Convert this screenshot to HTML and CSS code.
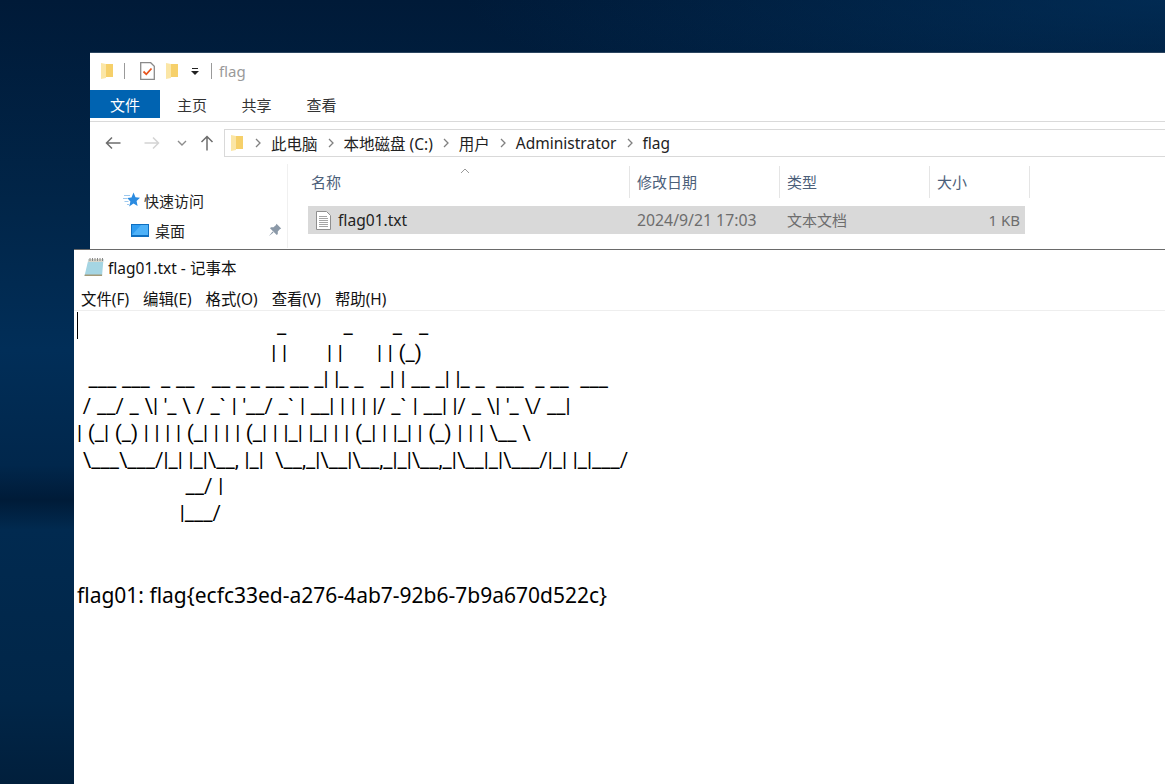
FILE: index.html
```
<!DOCTYPE html>
<html lang="zh">
<head>
<meta charset="utf-8">
<title>flag01.txt - 记事本</title>
<link rel="stylesheet" href="styles.css">
</head>
<body>
<div class="desktop">
  <section class="explorer">
    <div class="qat">
      <svg class="ic-folder" viewBox="0 0 14 18"><path d="M5 2h8v13H5z" fill="#f6d06a"/><path d="M1 1l5 1v14l-5 1z" fill="#fbe6a6"/></svg>
      <span class="qat-sep"></span>
      <svg class="ic-check" viewBox="0 0 15 18"><path d="M.7.7h10l3.600 3.600v13h-13.600z" fill="#fff" stroke="#8a8a8a" stroke-width="1.300"/><path d="M3.500 9.500l2.800 2.800L11.500 6.500" fill="none" stroke="#e8541c" stroke-width="1.800"/></svg>
      <svg class="ic-folder" viewBox="0 0 14 18"><path d="M5 2h8v13H5z" fill="#f6d06a"/><path d="M1 1l5 1v14l-5 1z" fill="#fbe6a6"/></svg>
      <svg class="ic-drop" viewBox="0 0 8 7"><path d="M1 0h6v1H1zM0 3h8L4 7z" fill="#222"/></svg>
      <span class="qat-sep two"></span>
      <span class="win-title">flag</span>
    </div>
    <div class="ribbon">
      <span class="tab active">文件</span>
      <span class="tab">主页</span>
      <span class="tab">共享</span>
      <span class="tab">查看</span>
    </div>
    <div class="navbar">
      <svg class="nav back" viewBox="0 0 16 14"><path d="M15.500 7H1.500M7 1.500 1.500 7 7 12.500" fill="none" stroke="#6d6d6d" stroke-width="1.500"/></svg>
      <svg class="nav fwd" viewBox="0 0 16 14"><path d="M.5 7h14M9 1.500 14.500 7 9 12.500" fill="none" stroke="#d4d4d4" stroke-width="1.500"/></svg>
      <svg class="nav down" viewBox="0 0 10 6"><path d="M1 1l4 4 4-4" fill="none" stroke="#8c8c8c" stroke-width="1.400"/></svg>
      <svg class="nav up" viewBox="0 0 14 16"><path d="M7 15.500V1.500M1.500 7 7 1.500 12.500 7" fill="none" stroke="#6d6d6d" stroke-width="1.500"/></svg>
      <div class="crumbs">
        <svg class="ic-folder" viewBox="0 0 14 18"><path d="M5 2h8v13H5z" fill="#f6d06a"/><path d="M1 1l5 1v14l-5 1z" fill="#fbe6a6"/></svg>
        <svg class="chev first" viewBox="0 0 6 10"><path d="M1 1l4 4-4 4" fill="none" stroke="#808080" stroke-width="1.300"/></svg>
        <span>此电脑</span>
        <svg class="chev" viewBox="0 0 6 10"><path d="M1 1l4 4-4 4" fill="none" stroke="#808080" stroke-width="1.300"/></svg>
        <span>本地磁盘 (C:)</span>
        <svg class="chev" viewBox="0 0 6 10"><path d="M1 1l4 4-4 4" fill="none" stroke="#808080" stroke-width="1.300"/></svg>
        <span>用户</span>
        <svg class="chev" viewBox="0 0 6 10"><path d="M1 1l4 4-4 4" fill="none" stroke="#808080" stroke-width="1.300"/></svg>
        <span>Administrator</span>
        <svg class="chev" viewBox="0 0 6 10"><path d="M1 1l4 4-4 4" fill="none" stroke="#808080" stroke-width="1.300"/></svg>
        <span>flag</span>
      </div>
    </div>
    <div class="body">
      <nav class="side">
        <div class="side-row quick">
          <svg class="ic-star" viewBox="0 0 17 16"><path d="M10.500 .5l2 4.800 4.500.4-3.400 3.200 1 5L10.500 11.500 6.200 14.600l1.200-5.200L4.200 6l4.300-.6z" fill="#2b8be0"/><path d="M1 3.500h6M0 6.500h4M1.500 9.500h4M4 12.500h2" stroke="#9cc8ee" stroke-width="1"/></svg>
          <span>快速访问</span>
        </div>
        <div class="side-row desk">
          <svg class="ic-desk" viewBox="0 0 18 13"><rect width="18" height="13" fill="#0f6fc0"/><path d="M1 1h16v10H1z" fill="#2f9cf0"/><path d="M1 11 10 1h7v10z" fill="#4fb2f8"/></svg>
          <span>桌面</span>
          <svg class="ic-pin" viewBox="0 0 14 14"><path d="M8.500.8 13.200 5.500 11.800 6.200 9.800 8.500 9.800 11 8.800 12 2 5.200 3 4.200 5.500 4.200 7.800 2.200zM4.500 8.500 1 13l4.500-3.500z" fill="#8b99a8"/></svg>
        </div>
      </nav>
      <div class="files">
        <svg class="sort" viewBox="0 0 10 6"><path d="M1 5l4-4 4 4" fill="none" stroke="#9a9a9a"/></svg>
        <div class="cols">
          <span class="col c1">名称</span>
          <span class="col c2">修改日期</span>
          <span class="col c3">类型</span>
          <span class="col c4">大小</span>
        </div>
        <div class="file-row">
          <span class="cell c1 name">
            <svg class="ic-doc" viewBox="0 0 15 19"><path d="M.5.5h10l4 4v14H.5z" fill="#fff" stroke="#8f8f8f"/><path d="M3 5.500h8M3 7.500h9M3 9.500h9M3 11.500h9M3 13.500h9M3 15.500h9" stroke="#a5a5a5"/></svg>
            flag01.txt
          </span>
          <span class="cell c2 date">2024/9/21 17:03</span>
          <span class="cell c3">文本文档</span>
          <span class="cell c4">1 KB</span>
        </div>
      </div>
    </div>
  </section>

  <section class="notepad">
    <div class="np-title">
      <svg class="ic-note" viewBox="0 0 20 20"><path d="M4.500 2H19.500L18 19H.5z" fill="#a5d5e3"/><path d="M4.500 2H19.500L19.200 5H4z" fill="#d6d6cc"/><path d="M.5 19H18l.2-1.500H.8z" fill="#a39a78"/><path d="M6 1v3M8.500 1v3M11 1v3M13.500 1v3M16 1v3M18.500 1v3" stroke="#888"/></svg>
      <span>flag01.txt - 记事本</span>
    </div>
    <div class="np-menu">
      <span>文件(F)</span>
      <span>编辑(E)</span>
      <span>格式(O)</span>
      <span>查看(V)</span>
      <span>帮助(H)</span>
    </div>
    <div class="np-edit">
      <span class="caret"></span>
<pre class="np-text">                                   _          _       _   _
                                  | |       | |      | | (_)
  ___ ___  _ __   __ _ _ __ __ _| |_ _   _| | __ _| |_ _  ___  _ __  ___ 
 / __/ _ \| '_ \ / _` | '__/ _` | __| | | | |/ _` | __| |/ _ \| '_ \/ __|
| (_| (_) | | | | (_| | | | (_| | |_| |_| | | (_| | |_| | (_) | | | \__ \
 \___\___/|_| |_|\__, |_|  \__,_|\__|\__,_|_|\__,_|\__|_|\___/|_| |_|___/
                   __/ |
                  |___/


<span class="np-flag">flag01: flag{ecfc33ed-a276-4ab7-92b6-7b9a670d522c}</span></pre>
    </div>
  </section>
</div>
</body>
</html>
```

FILE: styles.css
```
* { box-sizing: border-box; }
html, body { margin: 0; height: 100%; overflow: hidden; }
body { font-family: "Noto Sans", "Noto Sans CJK SC", sans-serif; }
.desktop {
  position: relative;
  width: 1165px;
  height: 784px;
  overflow: hidden;
  background:
    radial-gradient(700px 120px at 100% 0, rgba(2,56,104,.55), rgba(2,56,104,0)),
    linear-gradient(180deg, #001a38 0, #012548 200px, #012e58 350px, #01274c 465px, #001b38 500px, #012a50 530px, #012648 700px, #011f3c 784px);
}
.explorer {
  position: absolute;
  left: 90px; top: 52px;
  width: 1075px; height: 198px;
  background: #fff;
  border-top: 1px solid #2c4560;
  color: #1e1e1e;
}
.qat { display: flex; align-items: center; height: 37px; padding-left: 10px; padding-bottom: 1px; }
.qat .ic-folder { width: 14px; height: 18px; }
.qat-sep { width: 1px; height: 16px; background: #9a9a9a; margin: 0 15px 0 10px; }
.qat-sep.two { margin: 0 7px 0 12px; }
.ic-check { width: 15px; height: 18px; margin-right: 10px; }
.ic-drop { width: 8px; height: 7px; margin-left: 12px; }
.win-title { font-size: 15px; color: #9a9a9a; }
.ribbon { display: flex; height: 32px; border-bottom: 1px solid #dadada; align-items: flex-start; }
.tab { width: 65px; height: 28px; line-height: 30px; text-align: center; font-size: 15px; color: #333; }
.tab.active { width: 70px; background: #0063b1; color: #fff; }
.tab:nth-child(2) { width: 64px; }
.navbar { display: flex; align-items: center; height: 42px; padding-left: 15px; }
.nav { display: block; flex: none; }
.back { width: 16px; height: 14px; }
.fwd { width: 16px; height: 14px; margin-left: 23px; }
.down { width: 10px; height: 6px; margin-left: 17px; }
.up { width: 14px; height: 16px; margin-left: 13px; }
.crumbs {
  flex: 1;
  display: flex;
  align-items: center;
  height: 28px;
  margin-left: 10px;
  padding-left: 5px;
  border: 1px solid #d9d9d9;
  border-right: 0;
  font-size: 15.500px;
  color: #222;
}
.crumbs .ic-folder { width: 14px; height: 18px; }
.chev { width: 6px; height: 10px; margin: 0 10px; flex: none; }
.chev.first { margin-left: 11px; }
.body { display: flex; height: 84px; }
.side { width: 198px; border-right: 1px solid #f0f0f0; position: relative; padding-top: 21px; font-size: 15px; }
.side-row { display: flex; align-items: center; height: 30px; position: relative; color: #222; }
.quick { padding-left: 33px; }
.ic-star { width: 17px; height: 16px; margin-right: 4px; }
.desk { padding-left: 41px; }
.ic-desk { width: 18px; height: 13px; margin-right: 6px; }
.ic-pin { width: 14px; height: 14px; position: absolute; left: 178px; top: 8px; }
.files { flex: 1; position: relative; padding-left: 20px; padding-top: 2px; }
.sort { position: absolute; left: 172px; top: 4px; width: 10px; height: 6px; }
.cols { display: flex; height: 32px; width: 722px; align-items: center; font-size: 15px; color: #4c607a; }
.col { height: 32px; line-height: 32px; border-right: 1px solid #e5e5e5; padding-left: 3px; }
.c1 { width: 322px; }
.c2 { width: 150px; padding-left: 7px; }
.c3 { width: 150px; padding-left: 7px; }
.c4 { width: 100px; padding-left: 7px; }
.file-row { display: flex; align-items: center; height: 28px; width: 717px; margin-top: 8px; background: #d9d9d9; font-size: 15px; line-height: 26px; color: #6d6d6d; }
.cell { display: block; }
.cell.date { font-size: 15.800px; }
.name { display: flex; align-items: center; color: #222; padding-left: 8px; width: 322px; font-size: 15.600px; }
.ic-doc { width: 15px; height: 19px; margin-right: 7px; }
.cell.c4 { width: 95px; padding: 0 5px 0 0; text-align: right; }
.notepad {
  position: absolute;
  left: 74px; top: 249px;
  width: 1091px; height: 535px;
  background: #fff;
  border-top: 1px solid #6a6a6a;
  color: #111;
}
.np-title { display: flex; align-items: center; height: 36px; padding-left: 10px; padding-bottom: 2px; font-size: 15.500px; }
.ic-note { width: 20px; height: 20px; margin-right: 4px; }
.np-menu { display: flex; height: 25px; align-items: center; border-bottom: 1px solid #eeeeee; padding-left: 7px; font-size: 15.400px; gap: 14px; }
.np-edit { position: relative; padding-left: 3px; }
.caret { position: absolute; left: 3px; top: 1px; width: 1px; height: 27px; background: #000; }
.np-text { margin: 0; padding-top: 2px; font-family: Roboto, sans-serif; font-size: 20.500px; word-spacing: .63px; line-height: 26.700px; color: #000; white-space: pre; }
.np-flag { display: inline-block; position: relative; top: 2px; font-family: "Noto Sans", sans-serif; font-size: 21px; word-spacing: 0; line-height: 26.700px; }
```
